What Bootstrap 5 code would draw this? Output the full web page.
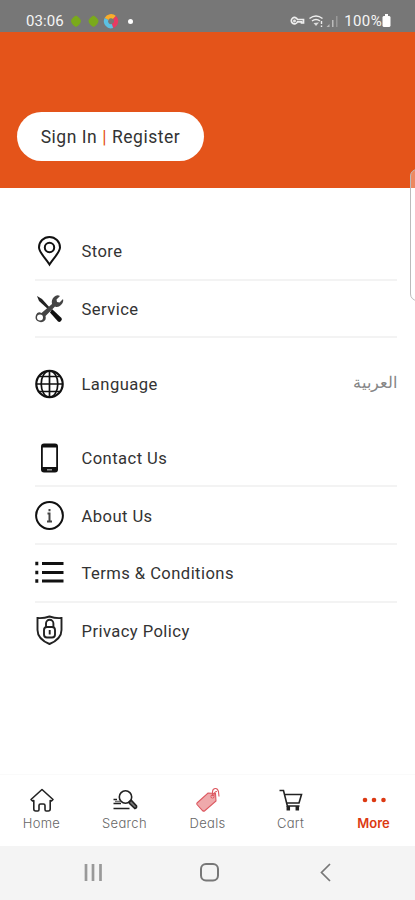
<!DOCTYPE html>
<html lang="en">
<head>
<meta charset="utf-8">
<meta name="viewport" content="width=device-width, initial-scale=1">
<title>More</title>
<link href="https://cdn.jsdelivr.net/npm/bootstrap@5.3.0/dist/css/bootstrap.min.css" rel="stylesheet">
<style>
body{font-family:Roboto,"Noto Sans",sans-serif;height:900px;background:#fff;color:#333;overflow:hidden}
svg{display:block;flex:none;overflow:visible}
.status-bar{height:32px;background:#777;color:#f5f5f5;font-size:15px;line-height:18px;padding:9px 24px 0 26px}
.clock{width:38px;letter-spacing:.1px}
.battery-text{letter-spacing:.35px}
.hero{height:156px;background:#e4541a;padding:80px 0 0 17px}
.sign-btn{width:187px;height:49px;font-size:17.5px;letter-spacing:.54px;color:#333;padding-top:2px}
.sign-btn i{font-style:normal;color:#e4541a}
.menu{padding:35px 18px 0 35px;height:586px}
.menu-row{height:57.7px;font-size:16.6px;letter-spacing:.43px;border-bottom:2px solid #f3f3f3;padding-top:1px}
.menu-row span{padding-top:3px}
.menu-row svg{width:29px;height:30px;margin-right:17.5px}
.plain{border-color:transparent}
.lang-row{margin:16.8px 0}
.menu-row .arabic{font-size:15.5px;letter-spacing:0;color:#858585;padding-top:0}
.tabs{height:72px;border-top:1px solid #fafafa;padding-top:12px}
.tab-item{width:83px;font:300 13px/15px Inter,Lato,sans-serif;letter-spacing:.3px;font-feature-settings:"cv11";color:#666}
.tab-item svg{width:26px;height:26px;margin-bottom:3px}
.tab-item.on{color:#dc3912;font-weight:600;letter-spacing:0}
.sysnav{height:54px;background:#f4f4f4}
.edge{right:-10px;top:169px;width:15px;height:132px;border:1.5px solid #bbb;border-radius:7px;background:#ffffff50}
</style>
</head>
<body class="d-flex flex-column position-relative">
<header class="status-bar d-flex align-items-center flex-shrink-0">
  <span class="clock">03:06</span>
  <svg width="72" height="16" viewBox="0 0 72 16">
    <path d="M12 2.500q4.500 2.500 5 5.500q-.5 3.500-5 6q-4.500-2.500-5-6q.5-3 5-5.500zM29.500 2.500q4.500 2.500 5 5.500q-.5 3.500-5 6q-4.500-2.500-5-6q.5-3 5-5.500z" fill="#7aaa1b"/>
    <g fill="none" stroke-width="4.200"><path d="M42.500 6A5 5 0 0 1 50.500 4.500" stroke="#f9ad2b"/><path d="M50.500 4.500A5 5 0 0 1 48.500 13" stroke="#e83a62"/><path d="M48.500 13A5 5 0 0 1 42.500 6" stroke="#5cc1e2"/></g>
    <circle cx="66.500" cy="8.500" r="2.500" fill="#fff"/>
  </svg>
  <svg class="ms-auto" width="54" height="16" viewBox="0 0 54 16">
    <g fill="none" stroke="#eee" stroke-width="1.700">
      <path d="M7.500 6.500H13.500V10H11.500V8.800H7.500A3.200 3.200 0 1 1 7.500 6.500z"/><circle cx="4.500" cy="8" r=".6"/>
      <path d="M19.500 5.500q6.500-5 13 0M22 8q4-3 8 0" stroke-width="1.500"/><path d="M23.500 10l2.500 3 3-3.500z" fill="#ddd" stroke="none"/><path d="M31.500 8v3M31.500 12.500v1.500" stroke-width="1.400"/>
    </g>
    <path d="M36.500 14h3v-3zM42 14h1.500V7H42z" fill="#bbb"/><path d="M46 14h1.500V3H46z" fill="#999"/>
  </svg>
  <span class="battery-text">100%</span>
  <svg width="9" height="13" viewBox="0 0 9 13"><path d="M3 0h3v2h1.500l1 1v9l-1 1h-6l-1-1V3l1-1H3z" fill="#fff"/></svg>
</header>

<section class="hero flex-shrink-0">
  <a href="#" class="sign-btn d-flex align-items-center justify-content-center bg-white rounded-pill text-decoration-none"><span>Sign In <i>|</i> Register</span></a>
</section>

<main class="menu flex-shrink-0">
  <div class="menu-row d-flex align-items-center">
    <svg viewBox="0 0 29 30" fill="none" stroke="#111" stroke-width="2"><path d="M14.500 28.500C11 22.500 4 16.500 4 11.500a10.500 10.500 0 0 1 21 0c0 5-7 11-10.500 17z"/><circle cx="14.500" cy="11.500" r="4.700"/></svg>
    <span>Store</span>
  </div>
  <div class="menu-row d-flex align-items-center">
    <svg viewBox="0 0 29 30"><path d="M2 2l5 3 9 10-1.500 1.500L4 7z" fill="#222"/><path d="M17 15l9.500 9q1 1.500-.5 3t-3 .5l-8-9z" fill="#111"/><path d="M17 10q-1-4 2-7t6-1l-3.500 3.500.5 2.500 2.500.5L28 5q1 3-2 6t-6 1.500L10.500 22q1 4-2 5.500t-6-.5-1.500-6 5.500-2z" fill="#444"/><circle cx="5" cy="23.500" r="3" fill="#fff"/></svg>
    <span>Service</span>
  </div>
  <div class="menu-row lang-row plain d-flex align-items-center">
    <svg viewBox="0 0 29 30" fill="none" stroke="#111" stroke-width="1.700"><circle cx="14.500" cy="15" r="13.200" stroke-width="2.200"/><ellipse cx="14.500" cy="15" rx="8.300" ry="13.200"/><path d="M14.500 2v26M1.500 15h26M3.500 7.500h22M3.500 22.500h22"/></svg>
    <span>Language</span>
    <span class="arabic ms-auto" lang="ar" dir="rtl">العربية</span>
  </div>
  <div class="menu-row d-flex align-items-center">
    <svg viewBox="0 0 29 30"><rect x="6" y=".5" width="17" height="29" rx="3" fill="#111"/><path d="M7.800 4.500h13.400v19.500H7.800z" fill="#fff"/><path d="M12 26.800h5" stroke="#aaa" stroke-width="1.300"/></svg>
    <span>Contact Us</span>
  </div>
  <div class="menu-row d-flex align-items-center">
    <svg viewBox="0 0 29 30" fill="none" stroke="#111" stroke-width="2"><circle cx="14.500" cy="14.500" r="13.400"/><path d="M12.500 12.500h2v7.500M12 20.500h5M14.500 8v2.300" stroke="#444"/></svg>
    <span>About Us</span>
  </div>
  <div class="menu-row d-flex align-items-center">
    <svg viewBox="0 0 29 30" stroke="#111" stroke-width="3" fill="none"><path d="M7 5.500h21.500M7 14.500h21.500M7 23h21.500"/><path d="M.3 5.500h3M.3 14.500h3M.3 23h3" stroke-width="3.500"/></svg>
    <span>Terms &amp; Conditions</span>
  </div>
  <div class="menu-row plain d-flex align-items-center">
    <svg viewBox="0 0 29 30" fill="none" stroke="#222" stroke-width="1.900"><path d="M14.500 .5q-6 2-12 1.500v12q0 9 12 14 12-5 12-14V2q-6 .5-12-1.500z"/><rect x="9" y="11" width="11" height="10.500" rx="3"/><path d="M11 11V7.500a3.700 3.700 0 0 1 7.400 0V11M14.700 14v4.500"/></svg>
    <span>Privacy Policy</span>
  </div>
</main>

<nav class="tabs d-flex flex-shrink-0">
  <div class="tab-item d-flex flex-column align-items-center">
    <svg viewBox="0 0 26 26" fill="none" stroke="#222" stroke-width="1.600" stroke-linejoin="round"><path d="M13 2.500L2 12.500l1.500 1.500 1.300-.5V22q0 2 2 2h2q1.200 0 1.200-1.500v-4q0-1.500 1.500-1.500h3q1.500 0 1.500 1.500v4q0 1.500 1.200 1.500h2q2 0 2-2v-8.500l1.300.5 1.500-1.500z"/></svg>
    Home
  </div>
  <div class="tab-item d-flex flex-column align-items-center">
    <svg viewBox="0 0 26 26" fill="none" stroke="#222" stroke-width="1.600"><circle cx="13.500" cy="10" r="6.200"/><path d="M17.500 14.500l2-1 5 5.500q.5 2-1.500 2.500l-5.500-5z" fill="#777"/><path d="M1.500 12.500H5M1.500 16.500H9M1.500 21.500h16"/><path d="M3 14.500h5" stroke="#777"/></svg>
    Search
  </div>
  <div class="tab-item d-flex flex-column align-items-center">
    <svg viewBox="0 0 26 26" stroke="#dc5961" stroke-width="1.100"><path d="M2 16L13 6l7.500.5.500 7.500L9.500 24q-1 .5-2-.5L2 17.500q-.5-.8 0-1.500z" fill="#efa9ab"/><g fill="none"><circle cx="17.500" cy="9.500" r="1.500" fill="#fff"/><path d="M17.500 9.500V5q0-3 2.500-3.500t3.500 3l.5 5M19 8.500q0-4 3-4"/></g></svg>
    Deals
  </div>
  <div class="tab-item d-flex flex-column align-items-center">
    <svg viewBox="0 0 26 26" fill="none" stroke="#222" stroke-width="1.600"><path d="M1.500 3.500h4l4 16M6.500 7.500h17L21 16H9M8.500 19h13"/><path d="M10.300 19v4.500M19.300 19v4.500" stroke-width="3.500"/></svg>
    Cart
  </div>
  <div class="tab-item on d-flex flex-column align-items-center">
    <svg viewBox="0 0 26 26" fill="#dc3912"><circle cx="4" cy="13" r="2.300"/><circle cx="13" cy="13" r="2.300"/><circle cx="22.500" cy="13" r="2.300"/></svg>
    More
  </div>
</nav>
<footer class="sysnav flex-grow-1">
  <svg width="415" height="54" viewBox="0 0 415 54" fill="none" stroke="#777" stroke-width="2"><path d="M86 18v17M93 18v17M100.500 18v17" stroke="#999" stroke-width="2.700"/><rect x="201" y="18" width="17" height="16.500" rx="5"/><path d="M330 18l-8.500 8.500 8.500 8.500" stroke-width="1.700"/></svg>
</footer>
<div class="edge position-absolute"></div>
<script src="https://cdn.jsdelivr.net/npm/bootstrap@5.3.0/dist/js/bootstrap.bundle.min.js"></script>
</body>
</html>
